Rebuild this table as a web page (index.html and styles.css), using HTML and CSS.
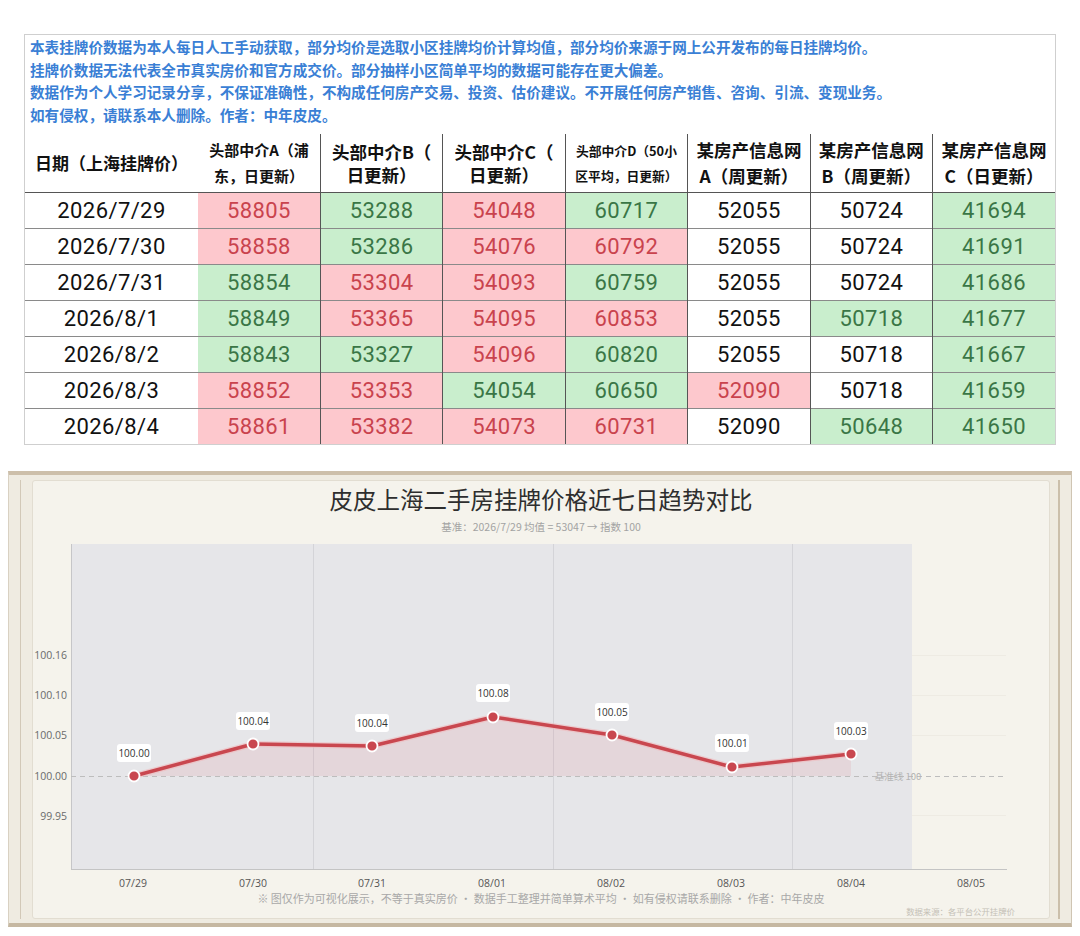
FILE: index.html
```html
<!DOCTYPE html>
<html lang="zh-CN">
<head>
<meta charset="utf-8">
<title>皮皮上海二手房挂牌价</title>
<link rel="stylesheet" href="styles.css">
</head>
<body>
<div class="sheet">
  <div class="notes">
    <p>本表挂牌价数据为本人每日人工手动获取，部分均价是选取小区挂牌均价计算均值，部分均价来源于网上公开发布的每日挂牌均价。</p>
    <p>挂牌价数据无法代表全市真实房价和官方成交价。部分抽样小区简单平均的数据可能存在更大偏差。</p>
    <p>数据作为个人学习记录分享，不保证准确性，不构成任何房产交易、投资、估价建议。不开展任何房产销售、咨询、引流、变现业务。</p>
    <p>如有侵权，请联系本人删除。作者：中年皮皮。</p>
  </div>
  <table class="grid">
    <colgroup><col class="c-date"><col><col><col><col><col><col><col></colgroup>
    <thead>
      <tr>
        <th class="h-date">日期（上海挂牌价）</th>
        <th class="h-sm nb">头部中介A（浦<br>东，日更新）</th>
        <th class="h-md">头部中介B（<br>日更新）</th>
        <th class="h-md">头部中介C（<br>日更新）</th>
        <th class="h-xs">头部中介D（50小<br>区平均，日更新）</th>
        <th class="h-lg">某房产信息网<br>A（周更新）</th>
        <th class="h-lg">某房产信息网<br>B（周更新）</th>
        <th class="h-lg">某房产信息网<br>C（日更新）</th>
      </tr>
    </thead>
    <tbody>
      <tr><td class="d">2026/7/29</td><td class="up nb">58805</td><td class="dn">53288</td><td class="up">54048</td><td class="dn">60717</td><td>52055</td><td>50724</td><td class="dn">41694</td></tr>
      <tr><td class="d">2026/7/30</td><td class="up nb">58858</td><td class="dn">53286</td><td class="up">54076</td><td class="up">60792</td><td>52055</td><td>50724</td><td class="dn">41691</td></tr>
      <tr><td class="d">2026/7/31</td><td class="dn nb">58854</td><td class="up">53304</td><td class="up">54093</td><td class="dn">60759</td><td>52055</td><td>50724</td><td class="dn">41686</td></tr>
      <tr><td class="d">2026/8/1</td><td class="dn nb">58849</td><td class="up">53365</td><td class="up">54095</td><td class="up">60853</td><td>52055</td><td class="dn">50718</td><td class="dn">41677</td></tr>
      <tr><td class="d">2026/8/2</td><td class="dn nb">58843</td><td class="dn">53327</td><td class="up">54096</td><td class="dn">60820</td><td>52055</td><td>50718</td><td class="dn">41667</td></tr>
      <tr><td class="d">2026/8/3</td><td class="up nb">58852</td><td class="up">53353</td><td class="dn">54054</td><td class="dn">60650</td><td class="up">52090</td><td>50718</td><td class="dn">41659</td></tr>
      <tr><td class="d">2026/8/4</td><td class="up nb">58861</td><td class="up">53382</td><td class="up">54073</td><td class="up">60731</td><td>52090</td><td class="dn">50648</td><td class="dn">41650</td></tr>
    </tbody>
  </table>
</div>

<div class="frame">
  <div class="frame-inner">
    <div class="panel">
      <h1 class="title">皮皮上海二手房挂牌价格近七日趋势对比</h1>
      <p class="subtitle">基准：2026/7/29 均值 = 53047 → 指数 100</p>
      <svg class="chart" width="1016" height="349" viewBox="33 540 1016 349" xmlns="http://www.w3.org/2000/svg">
        <rect x="71" y="544" width="841" height="325" fill="#e6e6e9"/>
        <g stroke="#eeebe3" stroke-width="1">
          <line x1="912" y1="655.5" x2="1006" y2="655.5"/>
          <line x1="912" y1="695.5" x2="1006" y2="695.5"/>
          <line x1="912" y1="735.5" x2="1006" y2="735.5"/>
          <line x1="912" y1="815.5" x2="1006" y2="815.5"/>
        </g>
        <g stroke="#d4d4d8" stroke-width="1">
          <line x1="313.5" y1="544" x2="313.5" y2="869"/>
          <line x1="553.5" y1="544" x2="553.5" y2="869"/>
          <line x1="792.5" y1="544" x2="792.5" y2="869"/>
        </g>
        <line x1="71.5" y1="544" x2="71.5" y2="869" stroke="#c6c6c8"/>
        <line x1="71" y1="869.5" x2="1007" y2="869.5" stroke="#c4c4c4"/>
        <line x1="71" y1="776.5" x2="1006" y2="776.5" stroke="#bdbdbd" stroke-dasharray="5 4"/>
        <text class="base-label" x="898" y="780" text-anchor="middle">基准线 100</text>
        <polygon points="134,776 253,744 372,746 493,717 612,735 732,767 851,754 851,776" fill="rgba(214,110,120,0.13)"/>
        <polyline points="134,776 253,744 372,746 493,717 612,735 732,767 851,754" fill="none" stroke="#f0b9bc" stroke-width="6" stroke-linejoin="round" stroke-linecap="round" opacity="0.6"/>
        <polyline points="134,776 253,744 372,746 493,717 612,735 732,767 851,754" fill="none" stroke="#c9474f" stroke-width="3.5" stroke-linejoin="round" stroke-linecap="round"/>
        <g fill="#c9474f" stroke="#fff" stroke-width="1.8">
          <circle cx="134" cy="776" r="5.5"/>
          <circle cx="253" cy="744" r="5.5"/>
          <circle cx="372" cy="746" r="5.5"/>
          <circle cx="493" cy="717" r="5.5"/>
          <circle cx="612" cy="735" r="5.5"/>
          <circle cx="732" cy="767" r="5.5"/>
          <circle cx="851" cy="754" r="5.5"/>
        </g>
        <g fill="#fff">
          <rect x="117" y="744" width="34" height="18" rx="3"/>
          <rect x="236" y="712" width="34" height="18" rx="3"/>
          <rect x="355" y="714" width="34" height="18" rx="3"/>
          <rect x="476" y="684" width="34" height="18" rx="3"/>
          <rect x="595" y="703" width="34" height="18" rx="3"/>
          <rect x="715" y="734" width="34" height="18" rx="3"/>
          <rect x="834" y="722" width="34" height="18" rx="3"/>
        </g>
        <g class="pt-label" text-anchor="middle">
          <text x="134" y="757">100.00</text>
          <text x="253" y="725">100.04</text>
          <text x="372" y="727">100.04</text>
          <text x="493" y="697">100.08</text>
          <text x="612" y="716">100.05</text>
          <text x="732" y="747">100.01</text>
          <text x="851" y="735">100.03</text>
        </g>
        <g class="y-label" text-anchor="end">
          <text x="67" y="659">100.16</text>
          <text x="67" y="699">100.10</text>
          <text x="67" y="739">100.05</text>
          <text x="67" y="780">100.00</text>
          <text x="67" y="820">99.95</text>
        </g>
        <g class="x-label" text-anchor="middle">
          <text x="133" y="887">07/29</text>
          <text x="253" y="887">07/30</text>
          <text x="372" y="887">07/31</text>
          <text x="492" y="887">08/01</text>
          <text x="611" y="887">08/02</text>
          <text x="731" y="887">08/03</text>
          <text x="851" y="887">08/04</text>
          <text x="971" y="887">08/05</text>
        </g>
      </svg>
      <p class="footnote">※ 图仅作为可视化展示，不等于真实房价 · 数据手工整理并简单算术平均 · 如有侵权请联系删除 · 作者：中年皮皮</p>
      <span class="source">数据来源：各平台公开挂牌价</span>
    </div>
  </div>
</div>
</body>
</html>
```

FILE: styles.css
```css
html, body {
  margin: 0;
  padding: 0;
  background: #ffffff;
}

body {
  font-family: "Noto Sans CJK SC", "Noto Sans", sans-serif;
  width: 1080px;
  height: 936px;
  overflow: hidden;
}

.sheet {
  margin: 34px 0 0 24px;
  width: 1030px;
  border: 1px solid #cfcfcf;
}

.notes {
  padding: 1px 5px 7px 5px;
  color: #3a7fd5;
  font-weight: 700;
  font-size: 14.6px;
  line-height: 22.7px;
}

.notes p {
  margin: 0;
  white-space: nowrap;
}

.grid {
  border-collapse: collapse;
  table-layout: fixed;
  width: 1030px;
}

.grid col.c-date {
  width: 173px;
}

.grid th {
  height: 58px;
  padding: 0;
  color: #111;
  font-weight: 700;
  text-align: center;
  vertical-align: middle;
  border-left: 1px solid #555;
  border-bottom: 1px solid #555;
  white-space: nowrap;
}

.grid .h-date {
  font-size: 17px;
  line-height: 24px;
  border-left: none;
}

.grid .h-sm {
  font-size: 15px;
  line-height: 26px;
}

.grid .h-md {
  font-size: 17.5px;
  line-height: 23px;
}

.grid .h-xs {
  font-size: 12.8px;
  line-height: 25px;
}

.grid .h-lg {
  font-size: 17.5px;
  line-height: 26px;
}

.grid td {
  height: 35px;
  padding: 0;
  text-align: center;
  vertical-align: middle;
  font-family: Roboto, "Noto Sans", sans-serif;
  font-size: 22px;
  line-height: 35px;
  letter-spacing: 0.4px;
  color: #111;
  border-left: 1px solid #555;
  border-top: 1px solid #8a8a8a;
}

.grid td.d {
  border-left: none;
}

.grid .nb {
  border-left: none;
}

.grid td.up {
  background: #fdc8cd;
  color: #c9434d;
}

.grid td.dn {
  background: #c9eecd;
  color: #3a7646;
}

.grid tbody tr:first-child td {
  border-top: none;
}

/* chart frame */
.frame {
  box-sizing: border-box;
  margin: 26px 0 0 8px;
  width: 1064px;
  border-top: 4px solid #cdbfaa;
  border-bottom: 4px solid #c6b8a2;
  border-left: 1px solid #d9d1c2;
  border-right: 1px solid #cfc5b3;
  background: #efebe1;
  padding: 5px 11px 4px 11px;
}

.frame-inner {
  border-left: 1px solid #d2c8b7;
  border-right: 2px solid #cbbfab;
  padding: 0 8px 0 11px;
}

.panel {
  position: relative;
  height: 439px;
  box-sizing: border-box;
  border: 1px solid #e2ddd1;
  border-radius: 3px;
  background: #f5f3ec;
  display: flex;
  flex-direction: column;
  align-items: center;
}

.title {
  margin: 2px 0 0 0;
  font-size: 23.5px;
  line-height: 32px;
  font-weight: 400;
  color: #2e2e2e;
}

.subtitle {
  margin: 4px 0 0 0;
  font-size: 10.5px;
  line-height: 16px;
  color: #a3a3a3;
}

.chart {
  display: block;
  margin-top: 5px;
  align-self: flex-start;
  font-family: "Open Sans", "Noto Sans CJK SC", sans-serif;
}

.chart .pt-label {
  font-size: 10px;
  fill: #333;
}

.chart .y-label {
  font-size: 10.5px;
  fill: #6a6a6a;
}

.chart .x-label {
  font-size: 10.5px;
  fill: #555;
}

.chart .base-label {
  font-family: "Noto Sans CJK SC", sans-serif;
  font-size: 9.5px;
  fill: #b3b3b3;
}

.footnote {
  margin: 1px 0 0 0;
  font-size: 11px;
  line-height: 16px;
  color: #a8a8a8;
}

.source {
  position: absolute;
  right: 34px;
  bottom: 1px;
  font-size: 8.4px;
  line-height: 12px;
  color: #c4c0b6;
}
```
